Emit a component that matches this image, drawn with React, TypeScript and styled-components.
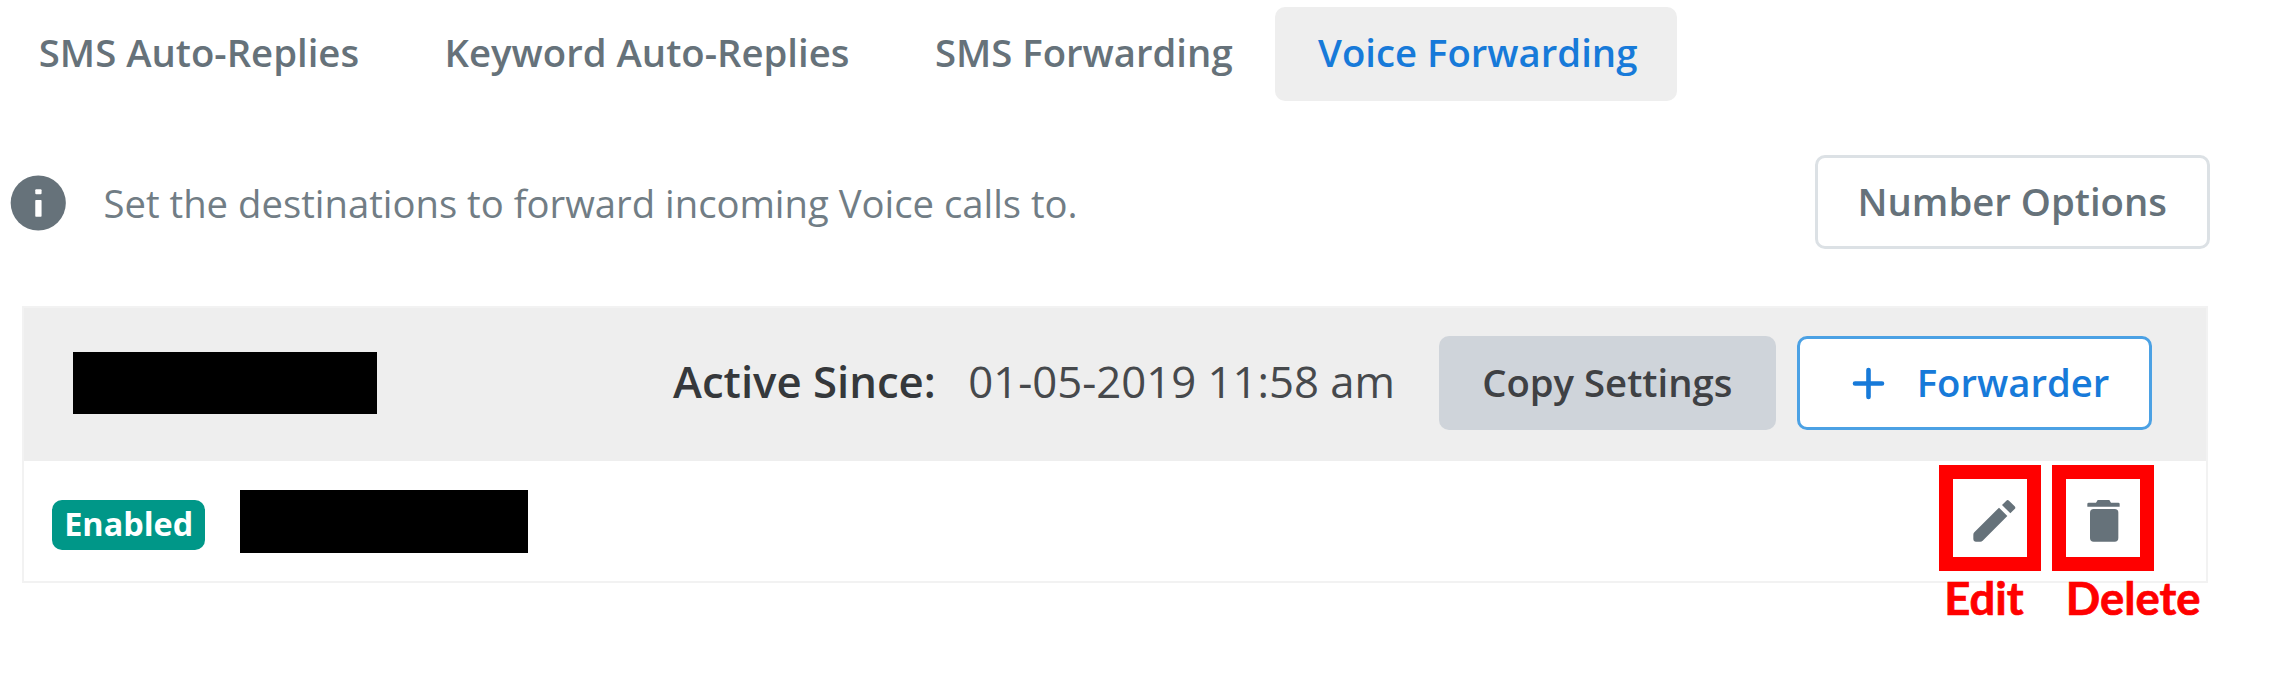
import React from 'react';
import styled, { createGlobalStyle } from 'styled-components';

const slate = '#66727a';
const blue = '#177ad9';

const Global = createGlobalStyle`
  * { box-sizing: border-box; }
  body {
    margin: 0;
    background: #fff;
    font-family: "Open Sans", "Noto Sans", sans-serif;
    overflow: hidden;
  }
  button { font-family: inherit; margin: 0; }
`;

const Page = styled.main`
  width: 2275px;
  height: 689px;
  padding-top: 6.5px;
  overflow: hidden;
`;

const Tabs = styled.nav`
  display: flex;
  gap: 2.2px;
  margin-left: -4.5px;
`;

const Tab = styled.button<{ $active?: boolean }>`
  height: 94px;
  padding: 0 40px 3px 43.3px;
  border: 0;
  border-radius: 10px;
  background: ${(p) => (p.$active ? '#eeeeee' : 'transparent')};
  color: ${(p) => (p.$active ? blue : slate)};
  font-size: 38.3px;
  font-weight: 600;
  white-space: nowrap;
`;

const Intro = styled.section`
  display: flex;
  align-items: center;
  height: 95px;
  margin-top: 54px;
  padding: 0 65px 0 10px;
`;

const InfoIcon = styled.svg`
  width: 56.5px;
  height: 56px;
  margin-top: 2px;
`;

const IntroText = styled.p`
  flex: 1;
  margin: 2px 0 0 37px;
  color: #717d85;
  font-size: 38.25px;
  white-space: nowrap;
`;

const Button = styled.button<{ $kind: 'plain' | 'muted' | 'primary'; $width: number }>`
  display: flex;
  align-items: center;
  justify-content: center;
  width: ${(p) => p.$width}px;
  height: 94.5px;
  padding: 0 0 2px;
  border-radius: 10px;
  border: ${(p) =>
    p.$kind === 'plain' ? '3px solid #dce1e5' : p.$kind === 'primary' ? '3px solid #4ba1e4' : '0'};
  background: ${(p) => (p.$kind === 'muted' ? '#cfd4da' : '#fff')};
  color: ${(p) => (p.$kind === 'plain' ? slate : p.$kind === 'primary' ? blue : '#3f4144')};
  font-size: 38.3px;
  font-weight: 600;
  white-space: nowrap;
`;

const PlusIcon = styled.svg`
  width: 33px;
  height: 33px;
  margin: 2px 32px 0 12px;
`;

const Panel = styled.section`
  width: 2186px;
  height: 277.5px;
  margin: 56px 0 0 21.8px;
  border: 2px solid #f2f2f2;
`;

const PanelHeader = styled.header`
  display: flex;
  align-items: center;
  height: 153px;
  padding: 0 53.8px 2px 49.2px;
  background: #eeeeee;
`;

const Redacted = styled.span<{ $width: number; $height: number }>`
  flex: none;
  width: ${(p) => p.$width}px;
  height: ${(p) => p.$height}px;
  background: #000;
`;

const Since = styled.div`
  display: flex;
  flex: 1;
  justify-content: flex-end;
  padding: 0 44px 4px 0;
  font-size: 43.7px;
  white-space: nowrap;
`;

const SinceLabel = styled.strong`
  margin-right: 32.5px;
  color: #35383b;
  font-weight: 600;
`;

const SinceDate = styled.span`
  color: #46494c;
`;

const HeaderActions = styled.div`
  display: flex;
  gap: 21.5px;
`;

const ForwarderRow = styled.div`
  display: flex;
  align-items: flex-start;
  padding: 4px 51.5px 0 28.2px;
`;

const Badge = styled.span`
  display: flex;
  align-items: center;
  justify-content: center;
  width: 153.5px;
  height: 50.7px;
  margin: 35px 34.5px 0 0;
  padding-bottom: 3px;
  border-radius: 10px;
  background: #009788;
  color: #fff;
  font-size: 32.4px;
  font-weight: 700;
`;

const RowNumber = styled.div`
  display: flex;
  flex: 1;
  margin-top: 25.3px;
`;

const RowActions = styled.div`
  display: flex;
  gap: 11px;
`;

const Action = styled.button`
  position: relative;
  width: 102px;
  height: 106px;
  padding: 0;
  border: 14px solid #ff0000;
  background: #fff;

  svg {
    display: block;
    width: 74px;
    height: 78px;
    fill: ${slate};
  }
`;

const Callout = styled.span<{ $left: number }>`
  position: absolute;
  top: 94.5px;
  left: ${(p) => p.$left - 14}px;
  color: #ff0000;
  font-family: Lato, sans-serif;
  font-size: 45.4px;
  font-weight: 700;
  line-height: 50px;
  -webkit-text-stroke: 0.7px #ff0000;
`;

export default function App() {
  return (
    <Page>
      <Global />
      <Tabs>
        <Tab>SMS Auto-Replies</Tab>
        <Tab>Keyword Auto-Replies</Tab>
        <Tab>SMS Forwarding</Tab>
        <Tab $active>Voice Forwarding</Tab>
      </Tabs>

      <Intro>
        <InfoIcon viewBox="0 0 170 168">
          <circle cx="85" cy="84" r="83" fill={slate} />
          <rect x="76" y="43" width="19" height="15" rx="3" fill="#fff" />
          <rect x="76" y="75" width="19" height="50" rx="2" fill="#fff" />
        </InfoIcon>
        <IntroText>Set the destinations to forward incoming Voice calls to.</IntroText>
        <Button $kind="plain" $width={395.5}>Number Options</Button>
      </Intro>

      <Panel>
        <PanelHeader>
          <Redacted $width={304} $height={62} />
          <Since>
            <SinceLabel>Active Since:</SinceLabel>
            <SinceDate>01-05-2019 11:58 am</SinceDate>
          </Since>
          <HeaderActions>
            <Button $kind="muted" $width={336.5}>Copy Settings</Button>
            <Button $kind="primary" $width={355}>
              <PlusIcon viewBox="0 0 33 33" fill="none" stroke={blue} strokeWidth="4.6" strokeLinecap="round">
                <path d="M3 16.5h27M16.5 3v27" />
              </PlusIcon>
              Forwarder
            </Button>
          </HeaderActions>
        </PanelHeader>
        <ForwarderRow>
          <Badge>Enabled</Badge>
          <RowNumber>
            <Redacted $width={288} $height={63} />
          </RowNumber>
          <RowActions>
            <Action>
              <svg viewBox="69 72 222 234">
                <path d="M207 158L232 183L158 257Q155 260 151 260H137Q130 260 130 253V239Q130 235 133 232Z" />
                <path d="M216 150L229 137Q233 133 237 137L254 154Q258 158 254 162L241 175Z" />
              </svg>
              <Callout $left={5}>Edit</Callout>
            </Action>
            <Action>
              <svg viewBox="408 72 222 234">
                <path d="M472 155V147Q472 143 476 143H498L503 135H538L543 143H565Q569 143 569 147V155Z" />
                <rect x="480" y="162" width="85" height="98" rx="11" />
              </svg>
              <Callout $left={13.4}>Delete</Callout>
            </Action>
          </RowActions>
        </ForwarderRow>
      </Panel>
    </Page>
  );
}
